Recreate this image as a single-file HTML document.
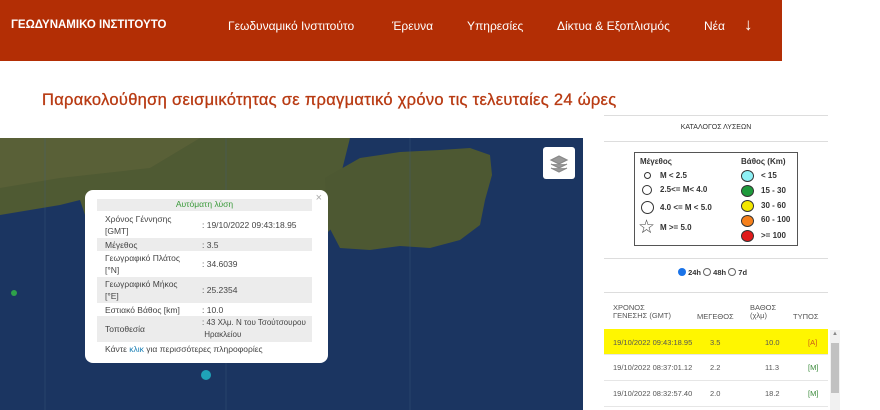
<!DOCTYPE html>
<html><head><meta charset="utf-8"><style>
*{margin:0;padding:0;box-sizing:border-box}
body{width:880px;height:410px;overflow:hidden;background:#fff;font-family:"Liberation Sans","DejaVu Sans",sans-serif;position:relative}
.hdr{position:absolute;left:0;top:0;width:782px;height:61px;background:#b32e05;color:#fff}
.hdr span{position:absolute;top:19px;font-size:12px}
.logo{left:11px;font-weight:bold;font-size:11.5px!important;top:19px!important}
h1{position:absolute;left:42px;top:91px;font-size:16.5px;font-weight:normal;color:#b83a12;letter-spacing:0.3px;-webkit-text-stroke:0.3px #b83a12}
.map{position:absolute;left:0;top:138px;width:583px;height:272px;overflow:hidden}
.pop{position:absolute;left:85px;top:190px;width:243px;height:173px;background:#fff;border-radius:8px;font-size:8.5px;color:#444}
.pop .r{position:absolute;left:12px;width:215px;}
.g{background:#ececec}
.pop .k{position:absolute;left:8px}
.pop .v{position:absolute;left:105px;white-space:nowrap}
.line{position:absolute;height:1px;background:#ddd;left:604px;width:224px}
.tb{position:absolute;font-size:7.5px;color:#555}
</style></head><body>
<div class="hdr">
<span class="logo">ΓΕΩΔΥΝΑΜΙΚΟ ΙΝΣΤΙΤΟΥΤΟ</span>
<span style="left:228px">Γεωδυναμικό Ινστιτούτο</span>
<span style="left:392px">Έρευνα</span>
<span style="left:467px">Υπηρεσίες</span>
<span style="left:557px">Δίκτυα &amp; Εξοπλισμός</span>
<span style="left:704px">Νέα</span>
<span style="left:744px;top:15px;font-size:17px">↓</span>
</div>
<h1>Παρακολούθηση σεισμικότητας σε πραγματικό χρόνο τις τελευταίες 24 ώρες</h1>
<div class="map"><svg width="583" height="272" viewBox="0 0 583 272">
<rect x="0" y="0" width="583" height="272" fill="#1b3561"/>
<path d="M0 0 L350 0 L345 20 L340 40 L330 62 L335 87 L320 102 L290 108 L250 110 L200 100 L150 94 L110 90 L85 77 L80 62 L60 67 L30 72 L0 77 Z" fill="#4f5a33"/>
<path d="M325 40 L360 20 L400 14 L440 12 L470 10 L490 17 L492 37 L485 62 L480 87 L460 102 L430 110 L400 108 L370 112 L340 110 L328 87 Z" fill="#4d5832"/>
<path d="M0 0 L200 0 L150 30 L60 40 L0 50 Z" fill="#5e6239" opacity="0.7"/>
<g stroke="#3e5d82" stroke-width="0.7" opacity="0.5"><line x1="45" y1="0" x2="45" y2="272"/><line x1="226" y1="0" x2="226" y2="272"/><line x1="410" y1="0" x2="410" y2="272"/></g>
<circle cx="14" cy="155" r="3" fill="#2ea14a"/>
<circle cx="206" cy="237" r="5" fill="#1fa3b8"/>
<rect x="543" y="9" width="32" height="32" rx="3" fill="#fff"/>
<path d="M551 22 L559 18 L567 22 L559 26 Z M551 26 L559 30 L567 26 M551 30 L559 34 L567 30" fill="#999" stroke="#888" stroke-width="1.2"/>
</svg></div>
<div class="pop">
<span style="position:absolute;right:6px;top:2px;color:#aaa;font-size:11px">×</span>
<div class="r g" style="top:9px;height:12px;text-align:center;color:#3a9a3a">Αυτόματη λύση</div>
<div class="r" style="top:22px;height:26px"><span class="k" style="top:1px;line-height:12px">Χρόνος Γέννησης<br>[GMT]</span><span class="v" style="top:8px">: 19/10/2022 09:43:18.95</span></div>
<div class="r g" style="top:48px;height:13px"><span class="k" style="top:2px">Μέγεθος</span><span class="v" style="top:2px">: 3.5</span></div>
<div class="r" style="top:61px;height:26px"><span class="k" style="top:1px;line-height:12px">Γεωγραφικό Πλάτος<br>[°N]</span><span class="v" style="top:8px">: 34.6039</span></div>
<div class="r g" style="top:87px;height:26px"><span class="k" style="top:1px;line-height:12px">Γεωγραφικό Μήκος<br>[°E]</span><span class="v" style="top:8px">: 25.2354</span></div>
<div class="r" style="top:113px;height:13px"><span class="k" style="top:2px">Εστιακό Βάθος [km]</span><span class="v" style="top:2px">: 10.0</span></div>
<div class="r g" style="top:126px;height:26px"><span class="k" style="top:8px">Τοποθεσία</span><span class="v" style="top:1px;line-height:12px;font-size:8px">: 43 Χλμ. Ν του Τσούτσουρου<br>&nbsp;Ηρακλείου</span></div>
<div style="position:absolute;left:20px;top:154px">Κάντε <span style="color:#1a7fb5">κλικ</span> για περισσότερες πληροφορίες</div>
</div>
<div class="line" style="top:115px"></div>
<div class="tb" style="left:604px;width:224px;top:124px;text-align:center;color:#333;font-size:7px">ΚΑΤΑΛΟΓΟΣ ΛΥΣΕΩΝ</div>
<div class="line" style="top:141px"></div>
<div style="position:absolute;left:634px;top:152px;width:164px;height:94px;border:1px solid #555;font-size:8px;font-weight:bold;color:#333">
<div style="position:absolute;left:5px;top:4px">Μέγεθος</div>
<div style="position:absolute;left:9px;top:19px;width:7px;height:7px;border:1px solid #333;border-radius:50%"></div><div style="position:absolute;left:25px;top:18px">M &lt; 2.5</div>
<div style="position:absolute;left:7px;top:32px;width:10px;height:10px;border:1px solid #333;border-radius:50%"></div><div style="position:absolute;left:25px;top:32px">2.5&lt;= M&lt; 4.0</div>
<div style="position:absolute;left:6px;top:48px;width:13px;height:13px;border:1px solid #333;border-radius:50%"></div><div style="position:absolute;left:25px;top:50px">4.0 &lt;= M &lt; 5.0</div>
<div style="position:absolute;left:3px;top:63px;font-size:19px;font-weight:normal;color:#444">☆</div><div style="position:absolute;left:25px;top:70px">M &gt;= 5.0</div>
<div style="position:absolute;left:106px;top:4px">Βάθος (Km)</div>
<div style="position:absolute;left:106px;top:17px;width:13px;height:12px;border:1px solid #333;border-radius:50%;background:#8ef0f5"></div><div style="position:absolute;left:126px;top:18px">&lt; 15</div>
<div style="position:absolute;left:106px;top:32px;width:13px;height:12px;border:1px solid #333;border-radius:50%;background:#1f9a3c"></div><div style="position:absolute;left:126px;top:33px">15 - 30</div>
<div style="position:absolute;left:106px;top:47px;width:13px;height:12px;border:1px solid #333;border-radius:50%;background:#f4e800"></div><div style="position:absolute;left:126px;top:48px">30 - 60</div>
<div style="position:absolute;left:106px;top:62px;width:13px;height:12px;border:1px solid #333;border-radius:50%;background:#f5801c"></div><div style="position:absolute;left:126px;top:62px">60 - 100</div>
<div style="position:absolute;left:106px;top:77px;width:13px;height:12px;border:1px solid #333;border-radius:50%;background:#e01b1b"></div><div style="position:absolute;left:126px;top:78px">&gt;= 100</div>
</div>
<div class="line" style="top:258px"></div>
<div style="position:absolute;left:678px;top:268px;font-size:7.5px;font-weight:bold;color:#333">
<span style="display:inline-block;width:8px;height:8px;border-radius:50%;background:#1a73e8;vertical-align:-1px"></span> 24h <span style="display:inline-block;width:8px;height:8px;border-radius:50%;border:1px solid #666;vertical-align:-1px"></span> 48h <span style="display:inline-block;width:8px;height:8px;border-radius:50%;border:1px solid #666;vertical-align:-1px"></span> 7d
</div>
<div class="line" style="top:292px"></div>
<div class="tb" style="left:613px;top:304px;line-height:8px">ΧΡΟΝΟΣ<br>ΓΕΝΕΣΗΣ (GMT)</div>
<div class="tb" style="left:697px;top:312px">ΜΕΓΕΘΟΣ</div>
<div class="tb" style="left:750px;top:304px;line-height:8px">ΒΑΘΟΣ<br>(χλμ)</div>
<div class="tb" style="left:793px;top:312px">ΤΥΠΟΣ</div>
<div style="position:absolute;left:604px;top:329px;width:224px;height:25px;background:#fff600"></div>
<div style="position:absolute;left:604px;top:380px;width:224px;height:1px;background:#e6e6e6"></div>
<div style="position:absolute;left:604px;top:354px;width:224px;height:1px;background:#e6e6e6"></div>
<div style="position:absolute;left:604px;top:406px;width:224px;height:1px;background:#e6e6e6"></div>
<div class="tb" style="left:613px;top:338px">19/10/2022 09:43:18.95</div><div class="tb" style="left:710px;top:338px">3.5</div><div class="tb" style="left:765px;top:338px">10.0</div><div class="tb" style="left:808px;top:338px;color:#c9581a">[A]</div>
<div class="tb" style="left:613px;top:363px">19/10/2022 08:37:01.12</div><div class="tb" style="left:710px;top:363px">2.2</div><div class="tb" style="left:765px;top:363px">11.3</div><div class="tb" style="left:808px;top:363px;color:#3a8a3a">[M]</div>
<div class="tb" style="left:613px;top:389px">19/10/2022 08:32:57.40</div><div class="tb" style="left:710px;top:389px">2.0</div><div class="tb" style="left:765px;top:389px">18.2</div><div class="tb" style="left:808px;top:389px;color:#3a8a3a">[M]</div>
<div style="position:absolute;left:830px;top:330px;width:10px;height:80px;background:#f1f1f1"></div>
<div style="position:absolute;left:831px;top:343px;width:8px;height:50px;background:#c1c1c1"></div>
<div style="position:absolute;left:832px;top:331px;font-size:6px;color:#888">▲</div>
</body></html>
